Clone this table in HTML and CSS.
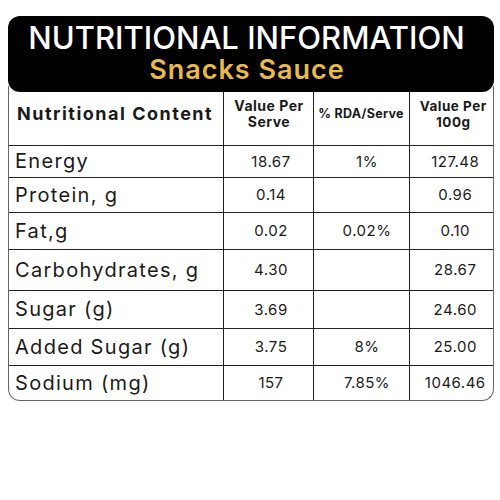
FILE: index.html
```html
<!DOCTYPE html>
<html>
<head>
<meta charset="utf-8">
<link rel="stylesheet" href="styles.css">
</head>
<body>
<div class="card">
  <div class="head">
    <div class="title">NUTRITIONAL INFORMATION</div>
    <div class="subtitle">Snacks Sauce</div>
  </div>
  <div class="tablewrap">
    <table class="nt">
      <colgroup>
        <col class="c1"><col class="c2"><col class="c3"><col class="c4">
      </colgroup>
      <tr class="hr">
        <th class="lbl">Nutritional Content</th>
        <th class="v1">Value Per<br>Serve</th>
        <th class="rda">% RDA/Serve</th>
        <th class="v2">Value Per<br>100g</th>
      </tr>
      <tr class="r1"><td class="lbl">Energy</td><td>18.67</td><td>1%</td><td>127.48</td></tr>
      <tr class="r2"><td class="lbl">Protein, g</td><td>0.14</td><td></td><td>0.96</td></tr>
      <tr class="r3"><td class="lbl">Fat,g</td><td>0.02</td><td>0.02%</td><td>0.10</td></tr>
      <tr class="r4"><td class="lbl">Carbohydrates, g</td><td>4.30</td><td></td><td>28.67</td></tr>
      <tr class="r5"><td class="lbl">Sugar (g)</td><td>3.69</td><td></td><td>24.60</td></tr>
      <tr class="r6"><td class="lbl">Added Sugar (g)</td><td>3.75</td><td>8%</td><td>25.00</td></tr>
      <tr class="r7"><td class="lbl">Sodium (mg)</td><td>157</td><td>7.85%</td><td>1046.46</td></tr>
    </table>
  </div>
</div>
</body>
</html>
```
FILE: styles.css
```css
html, body {
  margin: 0;
  padding: 0;
  background: #ffffff;
}
body {
  padding: 16px 0 0 8px;
  font-family: "Inter", "Open Sans", sans-serif;
  color: #111;
}
.card {
  width: 486px;
}
.head {
  background: #000;
  border-radius: 12px;
  height: 76px;
  display: flex;
  flex-direction: column;
  align-items: center;
  position: relative;
  z-index: 1;
}
.title {
  color: #fff;
  font-size: 31px;
  font-weight: 500;
  line-height: 32px;
  margin-top: 6px;
  letter-spacing: 0px;
  margin-left: -9px;
}
.subtitle {
  color: #e9b949;
  font-size: 27px;
  font-weight: 600;
  line-height: 30px;
  margin-top: 1px;
  letter-spacing: 1px;
  margin-left: -8px;
}
.tablewrap {
  margin-top: -6px;
  border: 1px solid #666;
  border-top: none;
  border-radius: 0 0 12px 12px;
  overflow: hidden;
}
.nt {
  width: 100%;
  border-collapse: collapse;
  table-layout: fixed;
}
.c1 { width: 214px; }
.c2 { width: 90px; }
.c3 { width: 96px; }
.c4 { width: 84px; }
.nt th, .nt td {
  border: 1.5px solid #222;
  padding: 0;
  text-align: center;
  font-size: 15px;
  letter-spacing: 0.5px;
  color: #1a1a1a;
}
.nt td:nth-child(2) { padding-left: 6px; }
.nt td:nth-child(3) { padding-left: 12px; }
.nt td:nth-child(4) { padding-left: 8px; }
.nt tr:first-child th { border-top: none; }
.nt tr th:first-child, .nt tr td:first-child { border-left: none; }
.nt tr th:last-child, .nt tr td:last-child { border-right: none; }
.nt tr:last-child td { border-bottom: none; }
.nt th {
  font-weight: 700;
  font-size: 14px;
  line-height: 16px;
  letter-spacing: 0.5px;
  padding-bottom: 3px;
}
.nt th.v1 { padding-left: 2px; }
.nt th.v2 { padding-left: 4px; font-size: 13.5px; }
.nt th.lbl {
  font-size: 18px;
  text-align: left;
  padding-left: 8px;
  letter-spacing: 1.5px;
}
.nt th.rda { font-size: 12.5px; letter-spacing: 0.3px; }
.nt td.lbl {
  text-align: left;
  padding-left: 6px;
  font-size: 20px;
  letter-spacing: 1.3px;
}
.hr { height: 59px; }
.r1 { height: 32px; }
.r2 { height: 35px; }
.r3 { height: 37px; }
.r4 { height: 41px; }
.r5 { height: 38px; }
.r6 { height: 37px; }
.r7 { height: 35px; }
```
